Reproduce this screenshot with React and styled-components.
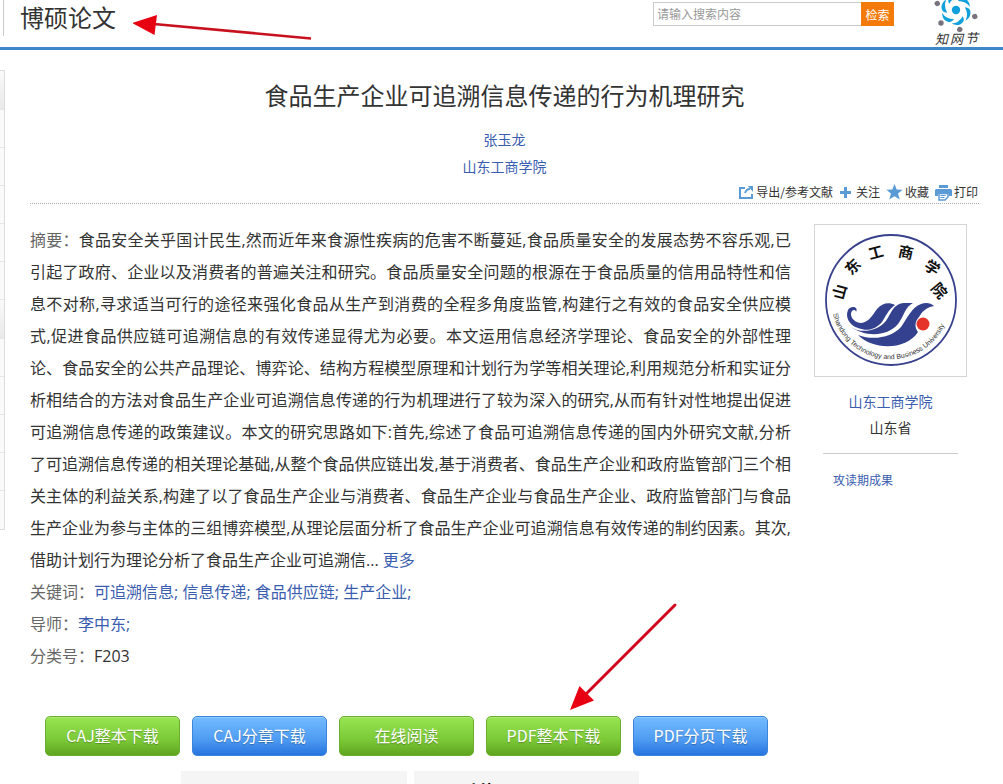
import React from "react";
import styled, { createGlobalStyle } from "styled-components";

const Global = createGlobalStyle`
  *, *::before, *::after { box-sizing: border-box; }
  body {
    margin: 0;
    background: #fff;
    color: #333;
    font-family: "Noto Sans CJK SC", "Liberation Sans", sans-serif;
    font-size: 16px;
  }
  a { color: #3a5db0; text-decoration: none; }
  a:hover { text-decoration: underline; }
  h1, h2, h3, p, dl, dd, ul { margin: 0; padding: 0; font-weight: 400; }
`;

const Header = styled.header`
  display: flex;
  align-items: flex-start;
  height: 50px;
  padding-left: 3px;
  border-bottom: 3px solid #3d88cb;
`;

const SectionName = styled.h2`
  position: relative;
  height: 36px;
  padding-left: 16px;
  border-left: 1px solid #ccc;
  font-size: 24px;
  line-height: 34px;
`;

const SearchForm = styled.form`
  display: flex;
  height: 24px;
  margin: 2px 40px 0 auto;
`;

const SearchInput = styled.input`
  width: 208px;
  padding: 0 3px 2px;
  border: 1px solid #ccc;
  border-right: 0;
  border-radius: 0;
  outline: 0;
  font: inherit;
  font-size: 12px;
  &::placeholder { color: #999; opacity: 1; }
`;

const SearchButton = styled.button`
  width: 33px;
  padding: 0;
  border: 0;
  background: #f57a0c;
  color: #fff;
  font: inherit;
  font-size: 12px;
`;

const LogoLink = styled.a`
  width: 69px;
  height: 47px;
  svg { display: block; }
`;

const Arrow = styled.svg`
  position: absolute;
  z-index: 2;
  pointer-events: none;
  left: ${(p) => p.$left};
  top: ${(p) => p.$top};
`;

const Body = styled.div`
  display: flex;
  align-items: flex-start;
`;

const SideNav = styled.ul`
  flex: none;
  width: 5px;
  margin-top: 20px;
  border: 1px solid #ddd;
  border-left: 0;
  list-style: none;
`;

const SideItem = styled.li`
  height: ${(p) => (p.$group ? 39 : 38)}px;
  border-bottom: 1px solid #e6e6e6;
  background: ${(p) => (p.$group ? "linear-gradient(#fafafa, #e9e9e9)" : "#fafafa")};
  &:last-child { border-bottom: 0; }
`;

const Main = styled.main`
  flex: 1;
  min-width: 0;
  padding: 27px 24px 0 25px;
`;

const Title = styled.h1`
  font-size: 24px;
  line-height: 36px;
  text-align: center;
`;

const Byline = styled.p`
  font-size: 14px;
  line-height: 27px;
  text-align: center;
`;

const Bylines = styled.div`
  padding-top: 13px;
`;

const Tools = styled.div`
  display: flex;
  justify-content: flex-end;
  gap: 6px;
  height: 24px;
  padding-right: 1px;
  border-bottom: 1px dotted #aaa;
`;

const Tool = styled.button`
  display: flex;
  align-items: center;
  gap: 2px;
  height: 24px;
  padding: 0;
  border: 0;
  background: none;
  color: #333;
  font: inherit;
  font-size: 12px;
  line-height: 24px;
`;

const Columns = styled.div`
  display: flex;
  align-items: flex-start;
  gap: 23px;
  padding: 20px 12px 0 0;
`;

const Article = styled.article`
  flex: 1;
  min-width: 0;
  font-family: "Open Sans", "Noto Sans CJK SC", sans-serif;
  line-height: 32px;
`;

const Abstract = styled.p`
  text-align: justify;
`;

const Label = styled.span`
  color: #666;
`;

const School = styled.aside`
  flex: none;
  width: 153px;
  text-align: center;
  font-size: 14px;
  line-height: 26px;
`;

const SealFrame = styled.div`
  height: 153px;
  margin-bottom: 11px;
  border: 1px solid #d5d5d5;
  svg { display: block; }
`;

const Achievements = styled.p`
  margin: 13px 9px 0;
  padding: 13px 10px 0;
  border-top: 1px solid #ccc;
  font-size: 12px;
  text-align: left;
`;

const Downloads = styled.div`
  position: relative;
  display: flex;
  gap: 12px;
  padding: 44px 0 0 15px;
`;

const Download = styled.button`
  width: 135px;
  height: 40px;
  padding: 0 0 2px;
  border: 1px solid ${(p) => (p.$blue ? "#3b86dd" : "#6bad2c")};
  border-radius: 5px;
  background: ${(p) =>
    p.$blue ? "linear-gradient(#74bbff, #4d9bf2 60%, #2774e0)" : "linear-gradient(#98e552, #7cc938 60%, #5fa520)"};
  box-shadow: inset 0 1px 0 rgba(255, 255, 255, 0.2);
  color: #fff;
  font: inherit;
  text-shadow: 0 1px 1px rgba(0, 0, 0, 0.25);
`;

const Panels = styled.div`
  display: flex;
  gap: 7px;
  padding: 15px 340px 0 151px;
`;

const Panel = styled.section`
  flex: 1;
  height: 48px;
  padding: 7px 18px;
  background: #f5f5f5;
  color: #000;
`;

const PanelTitle = styled.h3`
  font-size: 16px;
  font-weight: 700;
  line-height: 24px;
`;

const blades = [0, 60, 120, 180, 240, 300];

function NodeLogo() {
  return (
    <svg width="69" height="47" viewBox="934 0 69 47" role="img" aria-label="知网节">
      <circle cx="956" cy="10" r="4.2" fill="#12a0dc" />
      {blades.map((a) => (
        <g key={a} transform={`rotate(${a} 956 10)`}>
          <path d="M942 13 Q946 19 954 19 Q951 24 946 21 Q942 18 942 13Z" fill="#12a0dc" />
          <circle cx="941" cy="23" r="2.700" fill="#77727c" />
        </g>
      ))}
      <g fontFamily="Noto Sans CJK SC, sans-serif" fontSize="13" fill="#333" fontStyle="italic">
        <text x="935" y="44">知</text>
        <text x="950" y="44">网</text>
        <text x="965" y="43">节</text>
      </g>
    </svg>
  );
}

const sealGlyphs = [
  ["山", 25, 67, -75],
  ["东", 38, 42, -45],
  ["工", 61, 28, -15],
  ["商", 91, 28, 12],
  ["学", 117, 43, 32],
  ["院", 124, 66, 50],
];

function Seal() {
  return (
    <svg width="151" height="151" viewBox="0 0 151 151" role="img" aria-label="山东工商学院">
      <defs>
        <path id="seal-arc" d="M18 89 A59.500 59.500 0 0 0 134 87" />
      </defs>
      <circle cx="76" cy="75" r="65" fill="#fff" stroke="#38418c" strokeWidth="1.800" />
      {sealGlyphs.map(([c, x, y, r]) => (
        <text
          key={c}
          transform={`translate(${x} ${y}) rotate(${r})`}
          textAnchor="middle"
          dy="5"
          fontFamily="Noto Sans CJK SC, sans-serif"
          fontWeight="700"
          fontSize="15"
          fill="#111"
        >
          {c}
        </text>
      ))}
      <g fill="#34418f">
        <path d="M41 87 C44 82 36 80 33 85 C30 92 34 100 43 103 C53 107 61 104 67 97 C71 91 73 85 80 80 C74 77 67 78 62 84 C57 91 53 98 45 98 C38 97 34 90 37 86 C39 84 41 85 41 87Z" />
        <path d="M36 102 C46 109 62 106 70 97 C76 90 77 79 89 78 L98 78 C90 82 89 91 83 99 C72 112 50 112 36 102Z" />
        <path d="M43 110 C59 116 77 112 86 102 C93 92 97 82 106 79 C111 77 116 78 119 81 C110 83 107 87 104 92 C99 97 100 103 103 107 C91 126 57 125 43 110Z" />
      </g>
      <circle cx="108" cy="99" r="6.500" fill="#e63329" />
      <text fontFamily="Liberation Sans, sans-serif" fontSize="7" fill="#333">
        <textPath href="#seal-arc">Shandong Technology and Business University</textPath>
      </text>
    </svg>
  );
}

const ExportIcon = () => (
  <svg width="16" height="14" viewBox="0 0 16 14" fill="none" stroke="#5b9bd5" strokeWidth="2">
    <path d="M7 3H2v10h12V9" />
    <path d="M7 8c1-3 3-4 5-4" />
    <path d="M10 1h5v6z" fill="#5b9bd5" stroke="none" />
  </svg>
);
const PlusIcon = () => (
  <svg width="15" height="14" viewBox="0 0 15 14">
    <path d="M5 2h3v4h4v3H8v4H5V9H1V6h4z" fill="#5b9bd5" />
  </svg>
);
const StarIcon = () => (
  <svg width="17" height="16" viewBox="0 0 17 16">
    <path d="M8.500 0l2.200 5.600 6 .2-4.700 3.800 1.700 6-5.200-3.400-5.200 3.400 1.700-6L.3 5.800l6-.2z" fill="#5b9bd5" />
  </svg>
);
const PrintIcon = () => (
  <svg width="17" height="18" viewBox="0 0 17 18">
    <path d="M4 2h9v3H4zM1 6h15l1 1v6h-3v-2H3v2H0V7z" fill="#5b9bd5" />
    <path d="M4 10.500h9V14l-3 3H4z" fill="#fff" stroke="#5b9bd5" strokeWidth="1.500" />
    <path d="M5.500 12.500h5M5.500 14.500h4" stroke="#5b9bd5" />
  </svg>
);

const downloads = [
  ["CAJ整本下载", false],
  ["CAJ分章下载", true],
  ["在线阅读", false],
  ["PDF整本下载", false],
  ["PDF分页下载", true],
];

const sideItems = [true, false, false, false, false, false, true, false, false, false, false, false];

export default function App() {
  return (
    <>
      <Global />
      <Header>
        <SectionName>
          博硕论文
          <Arrow $left="129px" $top="14px" width="180" height="28" viewBox="133 14 180 28" aria-hidden="true">
            <path d="M154 24L311 38.500" stroke="#c9101f" strokeWidth="2.600" />
            <path d="M132 23L157 15L154.500 35Z" fill="#e60012" />
          </Arrow>
        </SectionName>
        <SearchForm onSubmit={(e) => e.preventDefault()}>
          <SearchInput type="text" placeholder="请输入搜索内容" aria-label="搜索内容" />
          <SearchButton type="submit">检索</SearchButton>
        </SearchForm>
        <LogoLink href="#">
          <NodeLogo />
        </LogoLink>
      </Header>
      <Body>
        <SideNav>
          {sideItems.map((group, i) => (
            <SideItem key={i} $group={group} />
          ))}
        </SideNav>
        <Main>
          <Title>食品生产企业可追溯信息传递的行为机理研究</Title>
          <Bylines>
            <Byline><a href="#">张玉龙</a></Byline>
            <Byline><a href="#">山东工商学院</a></Byline>
          </Bylines>
          <Tools>
            <Tool type="button"><ExportIcon />导出/参考文献</Tool>
            <Tool type="button"><PlusIcon />关注</Tool>
            <Tool type="button"><StarIcon />收藏</Tool>
            <Tool type="button"><PrintIcon />打印</Tool>
          </Tools>
          <Columns>
            <Article>
              <Abstract>
                <Label>摘要：</Label>
                食品安全关乎国计民生,然而近年来食源性疾病的危害不断蔓延,食品质量安全的发展态势不容乐观,已引起了政府、企业以及消费者的普遍关注和研究。食品质量安全问题的根源在于食品质量的信用品特性和信息不对称,寻求适当可行的途径来强化食品从生产到消费的全程多角度监管,构建行之有效的食品安全供应模式,促进食品供应链可追溯信息的有效传递显得尤为必要。本文运用信息经济学理论、食品安全的外部性理论、食品安全的公共产品理论、博弈论、结构方程模型原理和计划行为学等相关理论,利用规范分析和实证分析相结合的方法对食品生产企业可追溯信息传递的行为机理进行了较为深入的研究,从而有针对性地提出促进可追溯信息传递的政策建议。本文的研究思路如下:首先,综述了食品可追溯信息传递的国内外研究文献,分析了可追溯信息传递的相关理论基础,从整个食品供应链出发,基于消费者、食品生产企业和政府监管部门三个相关主体的利益关系,构建了以了食品生产企业与消费者、食品生产企业与食品生产企业、政府监管部门与食品生产企业为参与主体的三组博弈模型,从理论层面分析了食品生产企业可追溯信息有效传递的制约因素。其次,借助计划行为理论分析了食品生产企业可追溯信... <a href="#">更多</a>
              </Abstract>
              <p>
                <Label>关键词：</Label>
                <a href="#">可追溯信息;</a> <a href="#">信息传递;</a> <a href="#">食品供应链;</a> <a href="#">生产企业;</a>
              </p>
              <p>
                <Label>导师：</Label>
                <a href="#">李中东;</a>
              </p>
              <p>
                <Label>分类号：</Label>F203
              </p>
            </Article>
            <School>
              <SealFrame><Seal /></SealFrame>
              <p><a href="#">山东工商学院</a></p>
              <p>山东省</p>
              <Achievements><a href="#">攻读期成果</a></Achievements>
            </School>
          </Columns>
          <Downloads>
            {downloads.map(([name, blue]) => (
              <Download key={name} type="button" $blue={blue}>{name}</Download>
            ))}
            <Arrow $left="538px" $top="-70px" width="112" height="112" viewBox="568 602 112 112" aria-hidden="true">
              <path d="M585 695L675 605" stroke="#d2061b" strokeWidth="3" strokeLinecap="round" />
              <path d="M570 710L579.500 686L594 700.500Z" fill="#e60012" />
            </Arrow>
          </Downloads>
          <Panels>
            <Panel />
            <Panel>
              <PanelTitle>页面功能图</PanelTitle>
            </Panel>
          </Panels>
        </Main>
      </Body>
    </>
  );
}
